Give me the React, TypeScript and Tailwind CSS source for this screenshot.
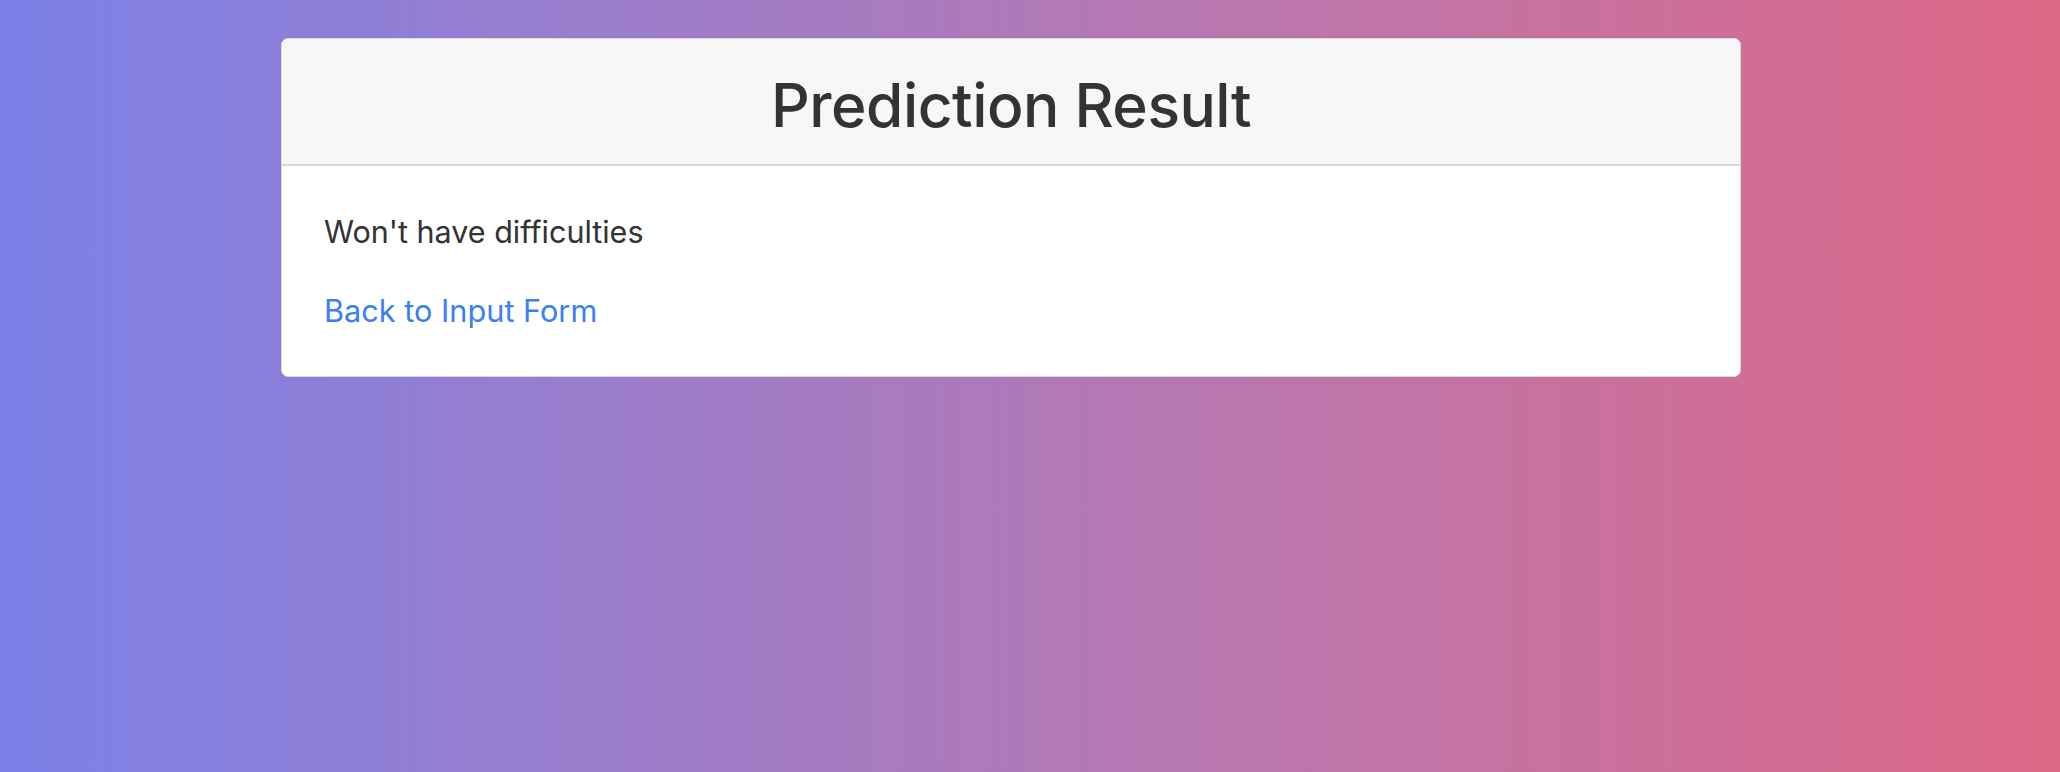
const App = () => {
  return (
    <div
      className="min-h-[772px] w-full bg-gradient-to-r from-[#7b80e7] to-[#dd6786] pt-[38px] pl-[281px]"
      style={{ fontFamily: 'Inter, "Liberation Sans", Arial, sans-serif' }}
    >
      <div className="w-[1460px] bg-white rounded-[7px] border border-[#d9d9d9] overflow-hidden">
        {/* Header */}
        <div className="bg-[#f7f7f7] border-b-2 border-[#d9d9d9] pt-[30px] pb-[22px]">
          <h1 className="text-center text-[60.5px] font-medium leading-[1.2] tracking-[-0.5px] text-[#333333]">
            Prediction Result
          </h1>
        </div>

        {/* Body */}
        <div className="px-[42px] pt-[42px] pb-[41px]">
          <p className="text-[30.5px] leading-[48px] text-[#333333] mb-[31px]">Won't have difficulties</p>
          <a href="#" className="text-[30.7px] leading-[48px] text-[#3b7ff0]">
            Back to Input Form
          </a>
        </div>
      </div>
    </div>
  );
};

export default App;
